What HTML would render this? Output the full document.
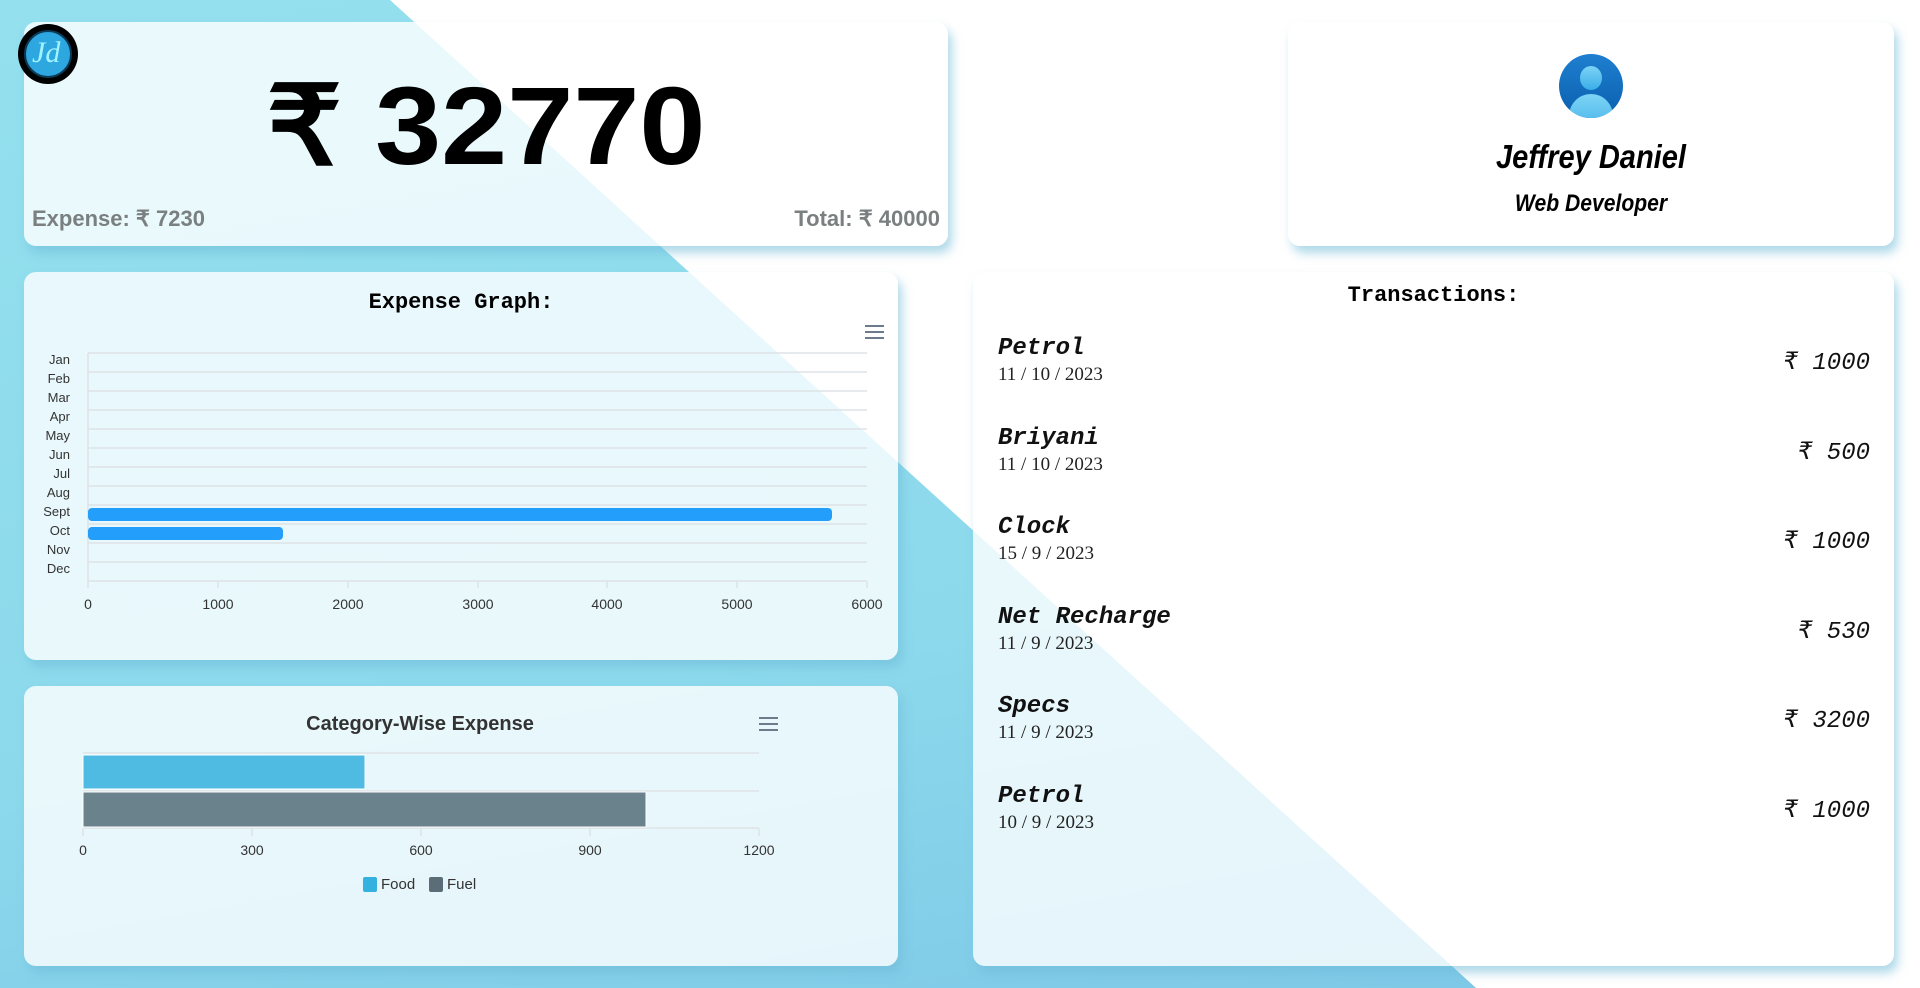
<!DOCTYPE html>
<html><head><meta charset="utf-8"><style>
*{margin:0;padding:0;box-sizing:border-box}
body{width:1920px;height:988px;overflow:hidden;position:relative;background:linear-gradient(170deg,#94e0ee 0%,#8cd9ec 60%,#7cc6e6 100%);font-family:"Liberation Sans",sans-serif}
.white{position:absolute;inset:0;background:#fff;clip-path:polygon(390px 0,1920px 0,1920px 988px,1476px 988px)}
.card{position:absolute;background:rgba(255,255,255,0.8);border-radius:12px;box-shadow:4px 7px 10px rgba(110,185,215,0.55)}
.abs{position:absolute}
.mono{font-family:"Liberation Mono",monospace}
.ham{position:absolute;width:19px}
.ham i{display:block;height:2px;background:#6b7b8b;margin-bottom:4px}
.item{position:absolute;left:25px;right:24px}
.item .n{font-family:"Liberation Mono",monospace;font-style:italic;font-weight:bold;font-size:24px;color:#111;line-height:28px}
.item .d{font-family:"Liberation Serif",serif;font-size:19px;color:#222;margin-top:1px}
.item .a{position:absolute;right:0;top:12px;font-family:"Liberation Mono",monospace;font-style:italic;font-size:24px;color:#111}
.ylab{position:absolute;right:0;font-size:13px;color:#333;text-align:right}
.xlab{position:absolute;font-size:14px;color:#333;transform:translateX(-50%)}
</style></head><body>
<div class="white"></div>

<div class="card" style="left:24px;top:22px;width:924px;height:224px">
  <div class="abs" style="left:-6px;top:2px;width:60px;height:60px;border-radius:50%;background:#000"></div>
  <div class="abs" style="left:0px;top:8px;width:48px;height:48px;border-radius:50%;background:#2ea7e0;border:2px solid #0a3a55"></div>
  <div class="abs" style="left:8px;top:14px;font-family:'Liberation Serif',serif;font-style:italic;font-size:30px;color:#a0f4ff">Jd</div>
  <div class="abs" style="left:0;width:924px;top:50px;text-align:center;font-weight:bold;font-size:110px;line-height:1;color:#000;transform:scaleX(1.08)">₹ 32770</div>
  <div class="abs" style="left:8px;top:184px;font-weight:bold;font-size:22px;color:#7a7f80">Expense: ₹ 7230</div>
  <div class="abs" style="right:8px;top:184px;font-weight:bold;font-size:22px;color:#7a7f80">Total: ₹ 40000</div>
</div>

<div class="card" style="left:1288px;top:22px;width:606px;height:224px">
  <svg class="abs" style="left:271px;top:32px" width="64" height="64" viewBox="0 0 64 64">
    <defs><linearGradient id="g" x1="0" y1="0" x2="0" y2="1"><stop offset="0" stop-color="#1f7fd0"/><stop offset="1" stop-color="#0a5fae"/></linearGradient>
    <linearGradient id="h" x1="0" y1="0" x2="0" y2="1"><stop offset="0" stop-color="#7dd3f5"/><stop offset="1" stop-color="#3aaee8"/></linearGradient>
    <clipPath id="c"><circle cx="32" cy="32" r="32"/></clipPath></defs>
    <circle cx="32" cy="32" r="32" fill="url(#g)"/>
    <g clip-path="url(#c)"><ellipse cx="32" cy="24" rx="11" ry="12" fill="url(#h)"/><ellipse cx="32" cy="62" rx="22" ry="22" fill="url(#h)"/></g>
  </svg>
  <div class="abs" style="left:0;width:606px;top:116px;text-align:center;font-weight:bold;font-style:italic;font-size:33px;color:#000;transform:scaleX(0.88)">Jeffrey Daniel</div>
  <div class="abs" style="left:0;width:606px;top:168px;text-align:center;font-weight:bold;font-style:italic;font-size:24px;color:#000;transform:scaleX(0.88)">Web Developer</div>
</div>

<div class="card" style="left:24px;top:272px;width:874px;height:388px">
  <div class="abs mono" style="left:0;width:874px;top:18px;text-align:center;font-weight:bold;font-size:22px;color:#000">Expense Graph:</div>
  <div class="ham" style="left:841px;top:53px"><i></i><i></i><i></i></div>
  <div class="abs" style="left:0;top:6px;width:46px;height:388px">
    <div class="ylab" style="top:74px">Jan</div><div class="ylab" style="top:93px">Feb</div><div class="ylab" style="top:112px">Mar</div><div class="ylab" style="top:131px">Apr</div><div class="ylab" style="top:150px">May</div><div class="ylab" style="top:169px">Jun</div><div class="ylab" style="top:188px">Jul</div><div class="ylab" style="top:207px">Aug</div><div class="ylab" style="top:226px">Sept</div><div class="ylab" style="top:245px">Oct</div><div class="ylab" style="top:264px">Nov</div><div class="ylab" style="top:283px">Dec</div>
  </div>
  <svg class="abs" style="left:0;top:0" width="874" height="388">
    <g stroke="#dde3e6" stroke-width="1.5">
      <line x1="64" y1="81" x2="843" y2="81"/><line x1="64" y1="100" x2="843" y2="100"/><line x1="64" y1="119" x2="843" y2="119"/><line x1="64" y1="138" x2="843" y2="138"/><line x1="64" y1="157" x2="843" y2="157"/><line x1="64" y1="176" x2="843" y2="176"/><line x1="64" y1="195" x2="843" y2="195"/><line x1="64" y1="214" x2="843" y2="214"/><line x1="64" y1="233" x2="843" y2="233"/><line x1="64" y1="252" x2="843" y2="252"/><line x1="64" y1="271" x2="843" y2="271"/><line x1="64" y1="290" x2="843" y2="290"/><line x1="64" y1="309" x2="843" y2="309"/>
      <line x1="64" y1="81" x2="64" y2="316"/><line x1="194" y1="309" x2="194" y2="316"/><line x1="324" y1="309" x2="324" y2="316"/><line x1="454" y1="309" x2="454" y2="316"/><line x1="583" y1="309" x2="583" y2="316"/><line x1="713" y1="309" x2="713" y2="316"/><line x1="843" y1="309" x2="843" y2="316"/>
    </g>
    <rect x="64" y="236" width="744" height="13" rx="4" fill="#239efa"/>
    <rect x="64" y="255" width="195" height="13" rx="4" fill="#239efa"/>
  </svg>
  <div class="xlab" style="left:64px;top:324px">0</div><div class="xlab" style="left:194px;top:324px">1000</div><div class="xlab" style="left:324px;top:324px">2000</div><div class="xlab" style="left:454px;top:324px">3000</div><div class="xlab" style="left:583px;top:324px">4000</div><div class="xlab" style="left:713px;top:324px">5000</div><div class="xlab" style="left:843px;top:324px">6000</div>
</div>

<div class="card" style="left:24px;top:686px;width:874px;height:280px">
  <div class="abs" style="left:0;width:792px;top:27px;text-align:center;font-weight:bold;font-size:20px;color:#333">Category-Wise Expense</div>
  <div class="ham" style="left:735px;top:31px"><i></i><i></i><i></i></div>
  <svg class="abs" style="left:0;top:0" width="874" height="280">
    <g stroke="#dde3e6" stroke-width="1.5"><line x1="59" y1="67" x2="735" y2="67"/><line x1="59" y1="105" x2="735" y2="105"/><line x1="59" y1="142" x2="735" y2="142"/>
    <line x1="59" y1="142" x2="59" y2="150"/><line x1="228" y1="142" x2="228" y2="150"/><line x1="397" y1="142" x2="397" y2="150"/><line x1="566" y1="142" x2="566" y2="150"/><line x1="735" y1="142" x2="735" y2="150"/></g>
    <rect x="59" y="69" width="282" height="34" fill="#4fbbe2" stroke="#fff"/>
    <rect x="59" y="106" width="563" height="35" fill="#6a828b" stroke="#fff"/>
    <rect x="339" y="191" width="14" height="15" rx="2" fill="#35b1e0"/>
    <rect x="405" y="191" width="14" height="15" rx="2" fill="#5b6e78"/>
  </svg>
  <div class="xlab" style="left:59px;top:156px">0</div><div class="xlab" style="left:228px;top:156px">300</div><div class="xlab" style="left:397px;top:156px">600</div><div class="xlab" style="left:566px;top:156px">900</div><div class="xlab" style="left:735px;top:156px">1200</div>
  <div class="abs" style="left:357px;top:190px;font-size:15px;color:#333">Food</div>
  <div class="abs" style="left:423px;top:190px;font-size:15px;color:#333">Fuel</div>
</div>

<div class="card" style="left:973px;top:272px;width:921px;height:694px">
  <div class="abs mono" style="left:0;width:921px;top:11px;text-align:center;font-size:22px;color:#000;font-weight:bold">Transactions:</div>
  <div class="item" style="top:63px"><div class="n">Petrol</div><div class="d">11 / 10 / 2023</div><div class="a">₹ 1000</div></div>
  <div class="item" style="top:153px"><div class="n">Briyani</div><div class="d">11 / 10 / 2023</div><div class="a">₹ 500</div></div>
  <div class="item" style="top:242px"><div class="n">Clock</div><div class="d">15 / 9 / 2023</div><div class="a">₹ 1000</div></div>
  <div class="item" style="top:332px"><div class="n">Net Recharge</div><div class="d">11 / 9 / 2023</div><div class="a">₹ 530</div></div>
  <div class="item" style="top:421px"><div class="n">Specs</div><div class="d">11 / 9 / 2023</div><div class="a">₹ 3200</div></div>
  <div class="item" style="top:511px"><div class="n">Petrol</div><div class="d">10 / 9 / 2023</div><div class="a">₹ 1000</div></div>
</div>
</body></html>
